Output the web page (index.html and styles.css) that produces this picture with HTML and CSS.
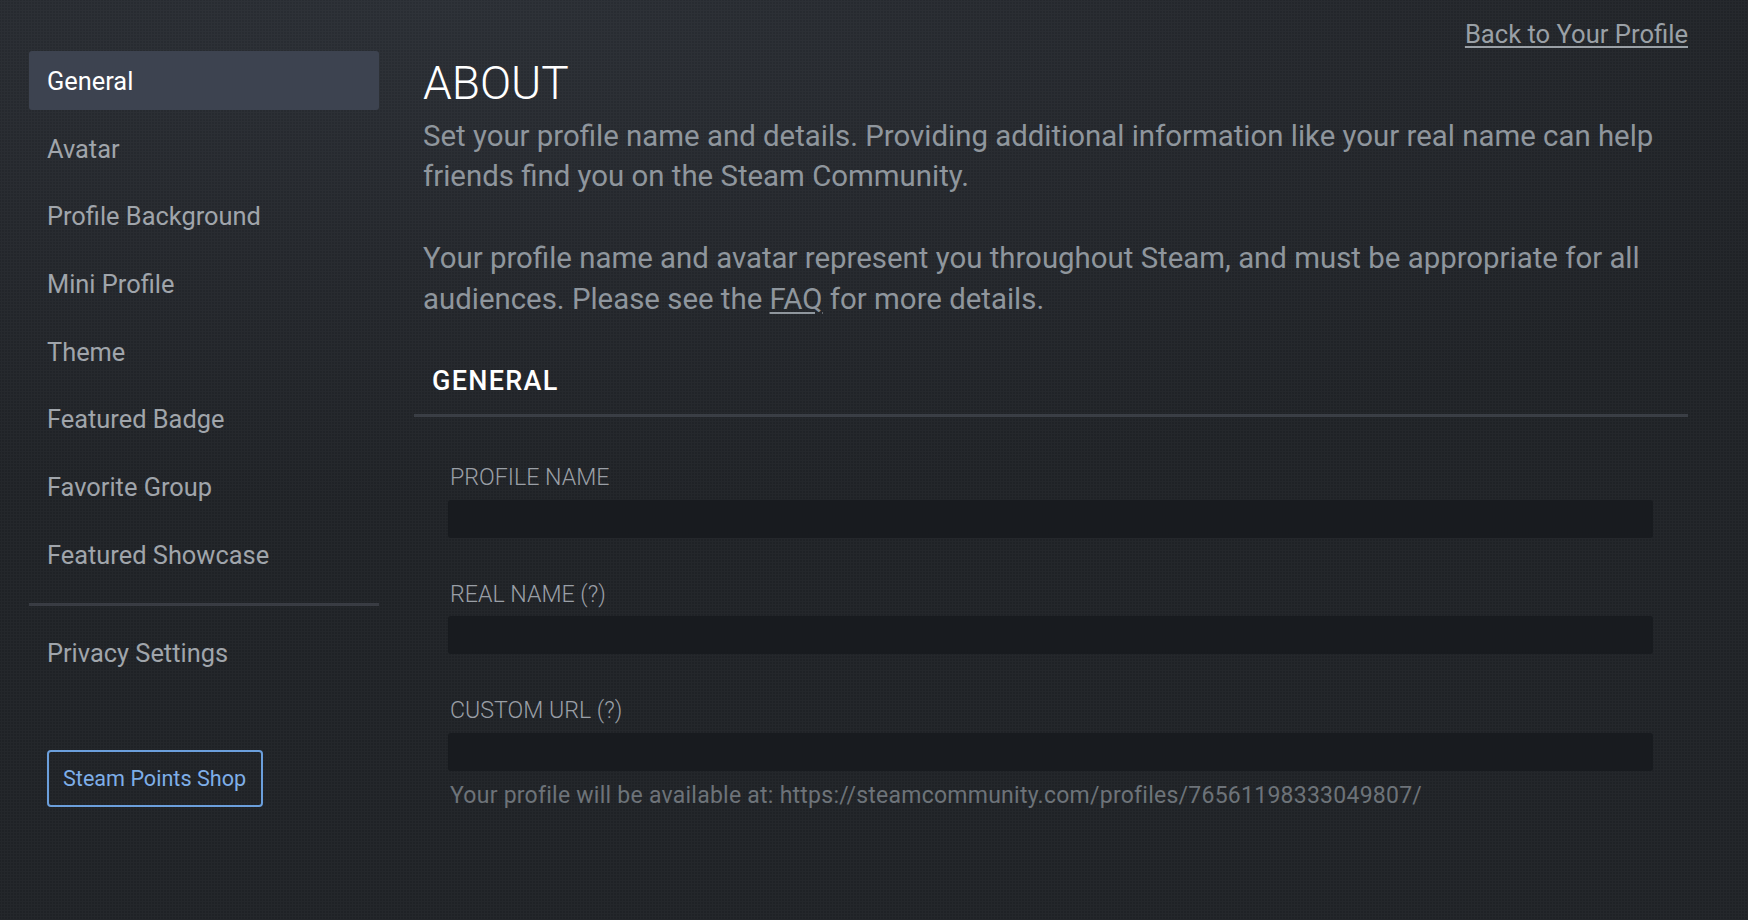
FILE: index.html
```html
<!DOCTYPE html>
<html lang="en">
<head>
<meta charset="utf-8">
<title>Edit Profile</title>
<link rel="stylesheet" href="styles.css">
</head>
<body>
<div class="page">
  <nav class="sidebar">
    <ul class="nav">
      <li class="nav-item active">General</li>
      <li class="nav-item">Avatar</li>
      <li class="nav-item">Profile Background</li>
      <li class="nav-item">Mini Profile</li>
      <li class="nav-item">Theme</li>
      <li class="nav-item">Featured Badge</li>
      <li class="nav-item">Favorite Group</li>
      <li class="nav-item">Featured Showcase</li>
    </ul>
    <div class="nav-divider"></div>
    <ul class="nav">
      <li class="nav-item">Privacy Settings</li>
    </ul>
    <a class="points-btn" href="#">Steam Points Shop</a>
  </nav>
  <main class="content">
    <div class="top-row"><a class="back-link" href="#">Back to Your Profile</a></div>
    <h1 class="title">ABOUT</h1>
    <p class="intro">Set your profile name and details. Providing additional information like your real name can help friends find you on the Steam Community.<br><br>Your profile name and avatar represent you throughout Steam, and must be appropriate for all audiences. Please see the <a class="faq" href="#">FAQ</a> for more details.</p>
    <h2 class="section-header">GENERAL</h2>
    <form class="fields">
      <div class="field">
        <label class="field-label">PROFILE NAME</label>
        <input class="field-input" type="text">
      </div>
      <div class="field">
        <label class="field-label">REAL NAME (?)</label>
        <input class="field-input" type="text">
      </div>
      <div class="field">
        <label class="field-label">CUSTOM URL (?)</label>
        <input class="field-input" type="text">
        <div class="field-note">Your profile will be available at: https://steamcommunity.com/profiles/76561198333049807/</div>
      </div>
    </form>
  </main>
</div>
</body>
</html>
```

FILE: styles.css
```css
html, body {
  margin: 0;
  padding: 0;
}

body {
  background: #1f2226;
  font-family: Roboto, "Liberation Sans", Arial, sans-serif;
}

.page {
  display: flex;
  min-height: 920px;
  background-color: #1f2226;
  background-image:
    radial-gradient(rgba(255, 255, 255, 0.025) 1px, transparent 1.2px),
    radial-gradient(ellipse 90% 55% at 25% 0%, #2a2e34 0%, #24272c 50%, rgba(31, 34, 38, 0) 100%);
  background-size: 3px 3px, 100% 100%;
}

.sidebar {
  flex: none;
  width: 350px;
  margin-left: 29px;
  padding-top: 51px;
}

.nav {
  list-style: none;
  margin: 0;
  padding: 0;
  display: flex;
  flex-direction: column;
  gap: 8.7px;
}

.nav-item {
  height: 59px;
  box-sizing: border-box;
  padding: 2px 0 0 18px;
  line-height: 57px;
  font-size: 25.4px;
  color: #a0a5ab;
  border-radius: 3px;
  white-space: nowrap;
}

.nav-item.active {
  background: #3d4350;
  color: #ffffff;
}

.nav-divider {
  height: 3px;
  background: #393c43;
  margin: 19px 0 17.5px;
}

.points-btn {
  display: inline-block;
  margin: 67.5px 0 0 18px;
  height: 57px;
  box-sizing: border-box;
  border: 2px solid #6b9fdc;
  border-radius: 4px;
  padding: 1px 15px 0 14px;
  line-height: 52px;
  font-size: 21.6px;
  color: #7eaee8;
  text-decoration: none;
  white-space: nowrap;
}

.content {
  flex: none;
  width: 1274px;
  margin-left: 35px;
  padding-top: 18.5px;
  display: flex;
  flex-direction: column;
}

.top-row {
  display: flex;
  justify-content: flex-end;
  height: 30px;
}

.back-link {
  font-size: 25.6px;
  line-height: 30px;
  color: #9aa0a6;
  text-decoration: underline;
  text-underline-offset: 3px;
}

.title {
  margin: 8.75px 0 0 9px;
  font-size: 46px;
  line-height: 52px;
  font-weight: 300;
  color: #ffffff;
}

.intro {
  margin: 6.45px 0 0 9px;
  font-size: 29.4px;
  line-height: 40.7px;
  color: #8f969d;
}

.faq {
  color: #8f969d;
  text-decoration: underline;
  text-underline-offset: 3px;
}

.section-header {
  margin: 45.7px 0 0;
  padding: 1px 0 17.4px 18px;
  font-size: 27px;
  line-height: 31px;
  font-weight: 500;
  letter-spacing: 1.3px;
  color: #ffffff;
  border-bottom: 3px solid #3a3e45;
}

.fields {
  margin: 0;
  padding: 47px 35px 0 34px;
  display: flex;
  flex-direction: column;
  gap: 43px;
}

.field {
  display: flex;
  flex-direction: column;
}

.field-label {
  display: block;
  padding-left: 2px;
  margin-bottom: 9.5px;
  font-size: 23.2px;
  line-height: 26px;
  font-weight: 300;
  color: #9a9fa6;
}

.field-input {
  display: block;
  width: 100%;
  height: 38px;
  box-sizing: border-box;
  border: 0;
  border-radius: 3px;
  background: #181b1f;
  padding: 0 12px;
  font-size: 20px;
  color: #ffffff;
  outline: none;
}

.field-note {
  margin-top: 12.3px;
  padding-left: 2px;
  font-size: 23px;
  line-height: 25px;
  letter-spacing: 0.25px;
  color: #6d7379;
}
```
